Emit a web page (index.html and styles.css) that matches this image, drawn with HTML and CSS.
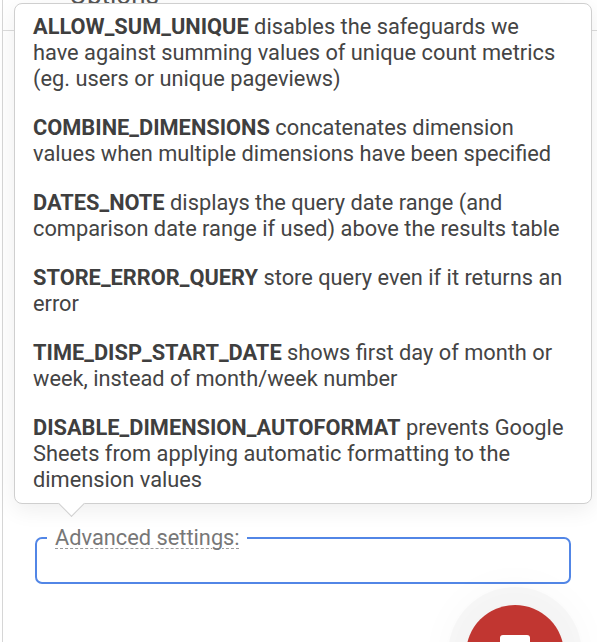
FILE: index.html
```html
<!DOCTYPE html>
<html>
<head>
<meta charset="utf-8">
<link rel="stylesheet" href="styles.css">
</head>
<body>
<div class="panel">
  <div class="panel-header"><span class="chev">&#8963;</span><span class="title">Options</span></div>
  <div class="panel-body">
    <fieldset class="adv">
      <legend><abbr class="adv-label">Advanced settings:</abbr></legend>
    </fieldset>
  </div>
</div>

<div class="tooltip">
  <p><b>ALLOW_SUM_UNIQUE</b> disables the safeguards we have against summing values of unique count metrics (eg. users or unique pageviews)</p>
  <p><b>COMBINE_DIMENSIONS</b> concatenates dimension values when multiple dimensions have been specified</p>
  <p><b>DATES_NOTE</b> displays the query date range (and comparison date range if used) above the results table</p>
  <p><b>STORE_ERROR_QUERY</b> store query even if it returns an error</p>
  <p><b>TIME_DISP_START_DATE</b> shows first day of month or week, instead of month/week number</p>
  <p><b>DISABLE_DIMENSION_AUTOFORMAT</b> prevents Google Sheets from applying automatic formatting to the dimension values</p>
  <span class="arrow"></span>
</div>

<div class="fab-wrap"><div class="fab"><span class="fab-icon"></span></div></div>
</body>
</html>
```

FILE: styles.css
```css
html {
  margin: 0;
  padding: 0;
  overflow: hidden;
  height: 642px;
}
body {
  margin: 0;
  padding: 0;
  width: 597px;
  height: 642px;
  overflow: hidden;
  position: relative;
  background: #ffffff;
  font-family: Roboto, "Liberation Sans", sans-serif;
  color: #444;
}
.panel {
  height: 642px;
  margin-left: 2px;
  border-left: 1px solid #d6d6d6;
  box-sizing: border-box;
}
.panel-header {
  height: 30px;
  border-bottom: 1px solid #dcdcdc;
  overflow: hidden;
  display: flex;
  align-items: flex-start;
  gap: 22px;
  padding-left: 26px;
}
.chev {
  font-size: 22px;
  color: #888;
  line-height: 20px;
  margin-top: -14px;
}
.title {
  font-size: 26px;
  color: #555;
  line-height: 24px;
  margin-top: -17px;
}
.panel-body {
  padding: 0 26px 0 32px;
}
.adv {
  margin: 496px 0 0 0;
  height: 57px;
  box-sizing: border-box;
  border: 2px solid #5286e6;
  border-radius: 7px;
  padding: 0;
}
.adv legend {
  margin-left: 10px;
  padding: 0 7px 0 8px;
  font-size: 21.8px;
  line-height: 22px;
  color: #777;
}
.adv-label {
  text-decoration: underline dashed #9a9a9a;
  text-decoration-thickness: 1px;
  text-underline-offset: 3px;
}
.tooltip {
  position: absolute;
  left: 14px;
  top: 3px;
  width: 578px;
  box-sizing: border-box;
  background: #fff;
  border: 1px solid #cfcfcf;
  border-radius: 8px;
  box-shadow: 0 6px 22px rgba(0, 0, 0, 0.07);
  padding: 10px 26px 10px 18px;
  font-size: 21.8px;
  line-height: 26px;
  color: #444;
}
.tooltip p {
  margin: 0 0 23px 0;
}
.tooltip p:last-of-type {
  margin-bottom: 0;
}
.tooltip b {
  color: #3f3f3f;
  font-weight: 700;
}
.arrow {
  position: absolute;
  left: 47px;
  bottom: -10px;
  width: 18px;
  height: 18px;
  background: #fff;
  border-right: 1px solid #cfcfcf;
  border-bottom: 1px solid #cfcfcf;
  transform: rotate(45deg);
}
.fab-wrap {
  position: absolute;
  left: 400px;
  top: 560px;
  width: 197px;
  height: 82px;
  overflow: hidden;
  padding: 45px 0 0 66px;
  box-sizing: border-box;
}
.fab {
  position: relative;
  width: 98px;
  height: 98px;
  border-radius: 50%;
  background: #c13631;
  box-shadow: 0 0 0 18px rgba(0, 0, 0, 0.022), 0 0 36px 22px rgba(0, 0, 0, 0.025);
}
.fab-icon {
  position: absolute;
  left: 34px;
  top: 30px;
  width: 30px;
  height: 30px;
  border-radius: 3px;
  background: #fff;
}
```
